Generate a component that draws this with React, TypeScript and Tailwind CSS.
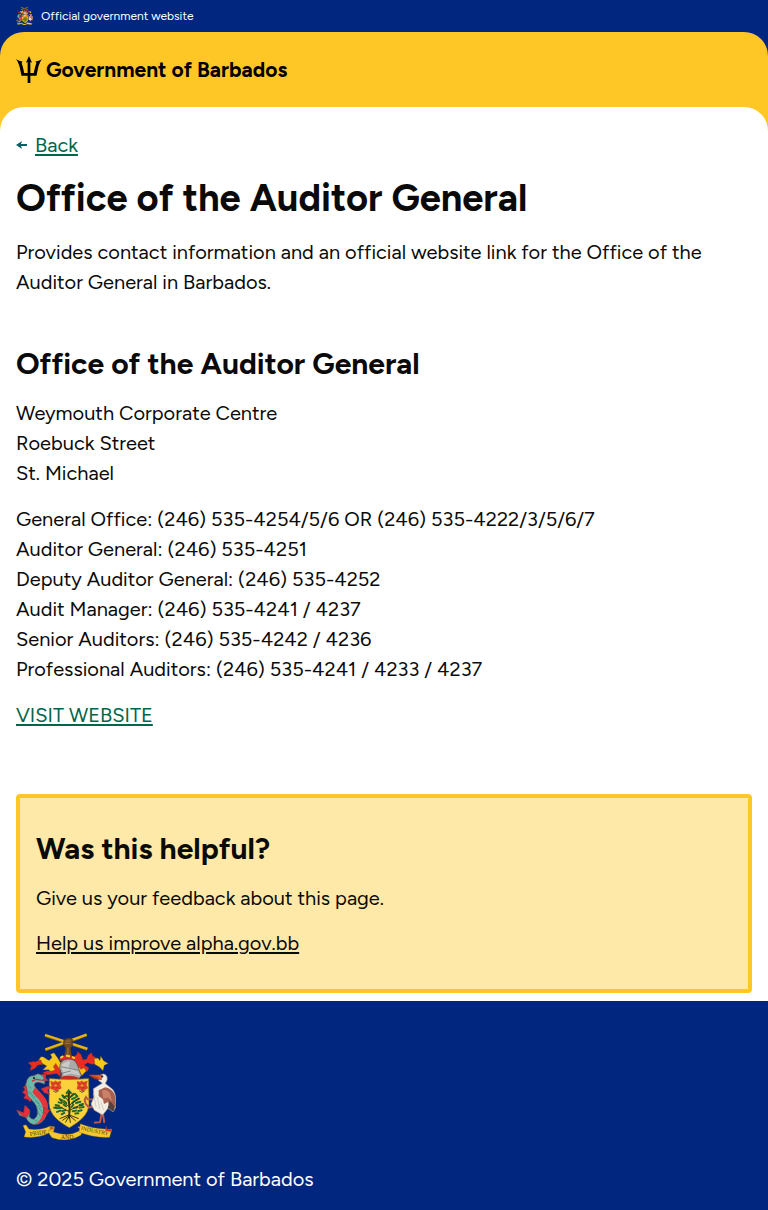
import React from "react";

const contactLines = [
  "General Office: (246) 535-4254/5/6 OR (246) 535-4222/3/5/6/7",
  "Auditor General: (246) 535-4251",
  "Deputy Auditor General: (246) 535-4252",
  "Audit Manager: (246) 535-4241 / 4237",
  "Senior Auditors: (246) 535-4242 / 4236",
  "Professional Auditors: (246) 535-4241 / 4233 / 4237",
];

const addressLines = ["Weymouth Corporate Centre", "Roebuck Street", "St. Michael"];

function Trident() {
  return (
    <svg viewBox="0 0 76 81" className="h-[27px] w-[26px] shrink-0" fill="#000" preserveAspectRatio="none" aria-hidden="true">
      <path d="M38 0 L47 20 L42 18 V51 L52 51 C54 40 56 31 59 23 C60 18 58 17 55 17 C63 16 70 14 76 9 C70 18 66 28 64 39 L60 59 H42 V81 H34 V59 H16 L12 39 C10 28 6 18 0 9 C6 14 13 16 21 17 C18 17 16 18 17 23 C20 31 22 40 24 51 L34 51 V18 L29 20 Z" />
    </svg>
  );
}

function Crest({ className, lettering = false }: { className: string; lettering?: boolean }) {
  return (
    <svg viewBox="18 24 300 324" className={className} preserveAspectRatio="none" role="img" aria-label="Coat of arms of Barbados">
      {/* crossed canes and arm */}
      <path d="M106 75 L230 30 M105 31 L232 73" stroke="#6c5712" strokeWidth="10" />
      <path d="M106 74 L230 29 M105 30 L232 72" stroke="#e4b51c" strokeWidth="7" />
      <path d="M161 47 Q167 38 178 39 L188 44 V60 L182 70 L186 98 H162 L167 70 L160 60 Z" fill="#6d4922" stroke="#3c2a15" strokeWidth="1.5" />
      <path d="M166 49 L181 48 M165 56 L181 55 M174 68 V92" stroke="#a4753b" strokeWidth="3" />

      {/* mantling */}
      <g stroke="#67331b" strokeWidth="1" strokeLinejoin="round">
        <path d="M154 116 C146 108 144 99 139 94 L132 84 L121 88 L126 98 L117 107 C106 101 101 94 93 96 L86 105 L94 108 L85 119 L101 119 L110 124 L98 136 L116 135 L125 145 L138 137 L150 156 Z" fill="#f7c91c" />
        <path d="M90 105 L77 111 L69 110 L54 114 L64 123 L60 138 L75 131 L84 121 L99 118 Z" fill="#e72c24" />
        <path d="M137 116 L151 137 L151 156 L140 147 L126 149 L112 151 L98 144 L112 138 L124 140 L136 135 L130 126 Z" fill="#e72c24" />
        <path d="M191 96 C199 90 203 90 202 79 L213 89 L219 105 L230 103 L234 92 L244 83 L249 94 L260 100 L251 107 L259 118 L244 119 L233 114 L223 121 L237 129 L232 141 L222 136 L214 145 L218 151 L206 158 Z" fill="#e72c24" />
        <path d="M252 102 L263 100 L270 107 L272 94 L281 108 L295 116 L283 122 L279 138 L268 127 L254 119 Z" fill="#f7c91c" />
        <path d="M201 122 L213 134 L222 129 L229 139 L216 153 L209 145 Z" fill="#f6bc19" />
      </g>
      <path d="M148 101 Q168 83 195 97 L192 106 L150 108 Z" fill="#d52b25" />
      <path d="M151 99 L160 94 M168 92 L180 95 M186 96 L195 101" stroke="#f9d22a" strokeWidth="6" />

      {/* helm */}
      <path d="M149 130 Q149 104 173 103 Q194 101 201 119 L214 153 L204 166 H151 L155 150 Z" fill="#a9a9a9" stroke="#494748" strokeWidth="2" />
      <path d="M153 124 Q162 110 180 109 L176 128 L202 137 L210 153 L183 147 L162 153 Z" fill="#c9cbc8" />
      <path d="M153 126 L177 131 L204 137 M155 146 L182 139" fill="none" stroke="#5e5e60" strokeWidth="2" />
      <path d="M152 157 Q181 149 208 160 L201 165 H151 Z" fill="#c52a25" />

      {/* shield */}
      <path d="M118 162 Q177 168 236 162 L237 238 C236 273 208 292 178 311 C147 293 119 273 117 237 Z" fill="#fbd23b" stroke="#8b671b" strokeWidth="2" />
      {[0, 79].map((shift) => (
        <g key={shift} transform={`translate(${shift} 0)`}>
          <path d="M122 171 L131 173 L136 169 L142 173 L153 170 L150 181 L154 191 L145 195 L139 203 L133 196 L122 193 L125 182 Z" fill="#e4442a" stroke="#c4391f" strokeWidth="1.5" />
          <path d="M126 176 L136 182 L148 174 M126 191 L136 186 L149 192 M138 176 V198" fill="none" stroke="#b0301f" strokeWidth="2" />
          <circle cx="137" cy="183" r="4" fill="#f1a128" />
          <path d="M129 199 L137 204 L147 198" stroke="#557433" strokeWidth="3" fill="none" />
        </g>
      ))}

      {/* bearded fig tree */}
      <g fill="none" stroke="#1f6a2c" strokeWidth="6" strokeLinecap="round">
        <path d="M170 206 L176 198 L183 206 M165 217 L173 214 M183 216 L192 209 M186 224 L197 219 M157 213 L163 221 M149 224 L157 228 M146 234 L155 236 M137 242 L147 244 M132 250 L141 252 M146 252 L155 250 M162 230 L169 236 M161 241 L168 246 M187 236 L193 230 M197 228 L207 223 M198 236 L211 232 M209 242 L219 239 M192 251 L202 249 M209 250 L221 248 M185 248 L190 241 M196 209 L202 216 M141 263 L152 259 M157 260 L166 258 M188 261 L199 259 M205 260 L215 258 M155 270 L163 266 M196 268 L205 267" />
      </g>
      <g fill="none" stroke="#33360f" strokeLinecap="round">
        <path d="M177 205 L176 226 L179 252 L177 281" strokeWidth="6" />
        <path d="M178 274 L158 288 M178 274 L167 294 M178 274 L181 295 M178 274 L196 289 M178 272 L205 283 M177 272 L150 283" strokeWidth="3" />
        <path d="M178 262 L150 248 L136 248 M178 247 L150 228 M177 232 L160 213 M179 258 L205 245 L219 243 M178 243 L206 222 M177 225 L190 206" strokeWidth="3" />
      </g>

      {/* dolphin */}
      <path d="M48 177 Q52 152 72 153 Q84 143 94 151 L107 148 L107 161 L113 168 L104 170 L105 179 L91 175 C74 170 69 181 78 190 C88 204 113 222 113 248 C115 279 93 306 69 301 C57 297 51 289 48 280 L29 274 L20 258 L42 266 L45 244 L60 259 L58 277 C68 293 83 280 82 263 C82 246 73 234 61 224 C47 213 40 194 48 177 Z" fill="#6ab9ab" stroke="#6c3d3b" strokeWidth="2" />
      <path d="M75 190 C95 211 118 224 113 256 C112 278 94 302 72 299 C89 297 101 273 99 253 C96 227 75 217 67 203 Z" fill="#e7343a" />
      <path d="M95 150 L107 147 L107 162 L116 168 L94 168 L103 162 Z M48 181 L40 188 L45 195 L37 204 L47 211 L41 222 L55 225 L58 233 L65 227 L54 214 Z M93 193 L113 185 L122 187 L113 198 L118 210 L103 205 Z M102 250 L119 257 L112 270 L101 267 Z M52 279 L35 274 L20 257 L41 266 L45 243 L60 258 Z" fill="#e82e38" stroke="#86333e" strokeWidth="1.5" />
      <path d="M66 170 L79 164 L93 167" fill="none" stroke="#d83038" strokeWidth="4" />
      <circle cx="72" cy="160" r="3" fill="#111" />
      <path d="M51 196 L66 208 M55 205 L78 220 M65 216 L90 240 M78 230 L95 251 M84 245 L97 265 M83 261 L92 277 M55 184 L65 193 M71 286 L84 292" stroke="#348579" strokeWidth="3" strokeDasharray="4 3" />

      {/* pelican */}
      <path d="M249 225 L233 225 L228 218 L224 226 L227 238 L237 250 L250 246 M267 251 L274 273 L270 294 L252 296 M279 271 L283 296" fill="none" stroke="#bd5747" strokeWidth="6" />
      <path d="M266 168 Q262 151 280 148 Q294 151 291 166 L286 177 L309 196 Q321 214 317 248 L310 263 L294 252 L278 272 L253 258 L243 239 L252 218 L250 193 L277 176 Z" fill="#f2eee4" stroke="#a69d93" strokeWidth="2" />
      <path d="M286 188 Q310 194 316 216 L318 247 L308 240 L299 248 L294 233 L282 239 L279 225 L266 215 L266 197 Z" fill="#a8614f" />
      <path d="M276 198 Q294 193 301 211 L306 231 L294 219 L280 222 Z" fill="#ca8269" />
      <path d="M299 229 L315 246 L311 263 L293 251 Z" fill="#57433e" />
      <path d="M275 151 L237 151 L255 163 L274 165 Z" fill="#e9622c" stroke="#892f26" strokeWidth="2" />
      <path d="M238 152 L271 160 L255 163 Z" fill="#a5362a" />
      <path d="M250 206 L258 248 M262 218 L269 254 M272 232 L281 257" stroke="#c7c1b5" strokeWidth="2" />
      <circle cx="277" cy="156" r="3" fill="#202020" />

      {/* motto ribbon */}
      <g stroke="#795c12" strokeWidth="1">
        <path d="M39 304 L48 302 L57 315 Q92 319 119 306 L134 308 L130 325 L119 326 Q84 344 42 339 L47 324 Z" fill="#f5c92d" />
        <path d="M134 313 L119 318 L128 323 Q175 339 202 323 L213 317 L203 309 L211 307 L218 320 L213 333 Q174 358 126 341 L119 331 L114 318 Z" fill="#f5c92d" />
        <path d="M211 299 Q245 313 286 315 L304 320 L299 340 Q248 342 207 324 Z" fill="#f5c92d" />
      </g>
      <path d="M121 309 L132 310 L127 315 L118 313 Z M288 303 L291 315 L306 314 L306 324 L286 320 Z" fill="#d83a22" />
      {lettering && (
        <g fill="#4a3a10" fontFamily="Liberation Serif, serif" fontSize="18">
          <text x="60" y="336" transform="rotate(-8 60 336)">PRIDE</text>
          <text x="152" y="345">AND</text>
          <text x="212" y="317" fontSize="17" transform="rotate(12 212 317)">INDUSTRY</text>
        </g>
      )}
    </svg>
  );
}

export default function App() {
  return (
    <div className="bg-[#00267f] font-['Figtree','Open_Sans',sans-serif] text-xl leading-[30px] text-[#0a0a0a]">
      <div className="flex h-8 items-center gap-2 px-4 text-xs text-white">
        <Crest className="h-[18px] w-[17px] shrink-0" />
        <span>Official government website</span>
      </div>

      <div className="rounded-t-3xl bg-[#ffc726]">
        <header className="px-4 py-6">
          <a href="#home" className="flex items-center gap-1 text-[21px] leading-[27px] font-bold text-black">
            <Trident />
            <span>Government of Barbados</span>
          </a>
        </header>

        <main className="rounded-t-3xl bg-white px-4 pt-6 pb-2">
          <a href="#back" className="flex items-center gap-2 leading-7 text-[#00654a]">
            <svg viewBox="0 0 11 8" className="h-2 w-[11px]" fill="#0e5f64" aria-hidden="true">
              <path d="M0 4 L6 0 L5 3 H11 V5 H5 L6 8 Z" />
            </svg>
            <span className="underline decoration-2 underline-offset-2">Back</span>
          </a>

          <h1 className="mt-4 text-[38px] leading-[46px] font-bold">Office of the Auditor General</h1>
          <p className="mt-4">
            Provides contact information and an official website link for the Office of the Auditor General in Barbados.
          </p>

          <section className="mt-12">
            <h2 className="text-[30px] leading-[37px] font-bold">Office of the Auditor General</h2>
            <address className="mt-4 not-italic">
              {addressLines.map((line) => (
                <div key={line}>{line}</div>
              ))}
            </address>
            <div className="mt-4">
              {contactLines.map((line) => (
                <div key={line}>{line}</div>
              ))}
            </div>
            <p className="mt-4">
              <a href="#website" className="text-[#00654a] underline decoration-2 underline-offset-2">VISIT WEBSITE</a>
            </p>
          </section>

          <section className="mt-16 rounded border-4 border-[#ffc726] bg-[#ffe9a8] px-4 py-8">
            <h2 className="text-[30px] leading-[37px] font-bold">Was this helpful?</h2>
            <p className="mt-4">Give us your feedback about this page.</p>
            <p className="mt-4 leading-7">
              <a href="#feedback" className="underline decoration-2 underline-offset-2">Help us improve alpha.gov.bb</a>
            </p>
          </section>
        </main>
      </div>

      <footer className="px-4 pt-8 pb-4 text-white">
        <Crest className="h-[107px] w-[100px]" lettering />
        <p className="mt-6">© 2025 Government of Barbados</p>
      </footer>
    </div>
  );
}
